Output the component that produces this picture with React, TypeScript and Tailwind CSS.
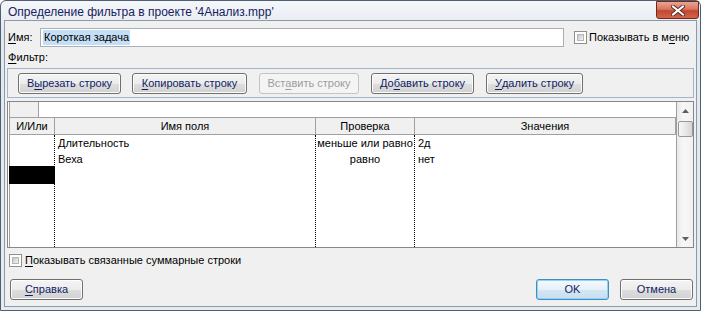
import React from "react";

const base = "font-['Liberation_Sans',Arial,sans-serif] text-[11px] leading-none";

function U({ children }: { children: React.ReactNode }) {
  return <span className="underline underline-offset-[2px]">{children}</span>;
}

function Btn({
  w,
  children,
  disabled,
  primary,
}: {
  w: string;
  children: React.ReactNode;
  disabled?: boolean;
  primary?: boolean;
}) {
  const frame = disabled
    ? "border-[#c4c4c4] text-[#9d9d9d] bg-[#f4f4f4]"
    : primary
      ? "border-[#3d8ec4] text-[#0f1d63] bg-[linear-gradient(to_bottom,#f4f9fd_0%,#e6f1fa_50%,#d3e6f4_51%,#c8dff0_100%)] shadow-[inset_0_0_0_1px_#98d1f1]"
      : "border-[#707070] text-[#0f1d63] bg-[linear-gradient(to_bottom,#f4f4f4_0%,#ececec_50%,#dedede_51%,#d1d1d1_100%)] shadow-[inset_0_0_0_1px_#fcfcfc]";
  return (
    <div
      className={`${w} h-[21px] shrink-0 rounded-[3px] border flex items-center justify-center ${frame}`}
    >
      {children}
    </div>
  );
}

function Check() {
  return (
    <div className="w-[13px] h-[13px] shrink-0 border border-[#8e8f8f] bg-white p-[2px]">
      <div className="w-full h-full bg-[linear-gradient(135deg,#c6c6c6,#f4f4f4)] border border-[#b5b5b5]" />
    </div>
  );
}

const rows = [
  { field: "Длительность", test: "меньше или равно", value: "2д" },
  { field: "Веха", test: "равно", value: "нет" },
];

export default function App() {
  return (
    <div className={`w-[703px] h-[311px] bg-white ${base}`}>
      <div className="w-[701px] h-[311px] rounded-t-[6px] border border-[#4d6073] bg-[linear-gradient(to_bottom,#f5f7fa,#e3e8ee_30px,#e6ebf0)] flex flex-col">
        {/* title bar */}
        <div className="h-[19px] flex items-start shrink-0">
          <span className="ml-[7px] mt-[5px] text-[12px] text-[#15225e]">
            Определение фильтра в проекте '4Анализ.mpp'
          </span>
          <div className="ml-auto mr-[1px] w-[43px] h-[18px] rounded-b-[3px] border border-[#6d2a20] bg-[linear-gradient(to_bottom,#eaa493_0%,#d9765f_45%,#c4472f_55%,#d0654c_100%)] flex items-center justify-center">
            <svg width="14" height="11" viewBox="0 0 14 11">
              <path d="M2 1.5 L12 9.5 M12 1.5 L2 9.5" stroke="#5a2a22" strokeWidth="4" strokeLinecap="square" />
              <path d="M2 1.5 L12 9.5 M12 1.5 L2 9.5" stroke="#ffffff" strokeWidth="2" strokeLinecap="square" />
            </svg>
          </div>
        </div>

        {/* client area */}
        <div className="mx-[3px] h-[287px] border border-[#8c99a6] bg-[#f0f0f0] flex flex-col">
          {/* name row */}
          <div className="mt-[7px] h-[19px] flex items-center">
            <span className="ml-[3px] w-[32px]">
              <U>И</U>мя:
            </span>
            <div className="w-[524px] h-[19px] border border-[#a7afb9] bg-white flex items-center pl-[2px]">
              <span className="bg-[#c3def5] h-[15px] px-[1px] flex items-center">Короткая задача</span>
            </div>
            <div className="ml-[10px]">
              <Check />
            </div>
            <span className="ml-[2px]">
              Показывать в м<U>е</U>ню
            </span>
          </div>

          <div className="mt-[4px] ml-[3px] h-[13px] flex items-center">
            <U>Ф</U>ильтр:
          </div>

          {/* toolbar group */}
          <div className="mt-[4px] ml-[2px] w-[687px] h-[30px] border border-[#a2b5cc] pt-[4px] pl-[10px] flex">
            <Btn w="w-[103px]">
              В<U>ы</U>резать строку
            </Btn>
            <div className="ml-[11px]">
              <Btn w="w-[115px]">
                <U>К</U>опировать строку
              </Btn>
            </div>
            <div className="ml-[12px]">
              <Btn w="w-[100px]" disabled>
                Вст<U>а</U>вить строку
              </Btn>
            </div>
            <div className="ml-[12px]">
              <Btn w="w-[103px]">
                До<U>б</U>авить строку
              </Btn>
            </div>
            <div className="ml-[12px]">
              <Btn w="w-[97px]">
                <U>У</U>далить строку
              </Btn>
            </div>
          </div>

          {/* grid */}
          <div className="mt-[3px] ml-[2px] w-[687px] h-[147px] border border-[#828790] bg-white flex">
            <div className="w-[668px] pl-[1px] flex flex-col">
              <div className="h-[16px] flex border-b border-[#a0a0a0] shrink-0">
                <div className="w-[30px] bg-[#f0f0f0] border-l border-r border-[#a0a0a0]" />
                <div className="flex-1 bg-white" />
              </div>
              <div className="h-[17px] flex border-b border-[#a0a0a0] bg-[#f0f0f0] shrink-0 text-black">
                <div className="w-[45px] border-l border-[#a0a0a0] flex items-center justify-center">И/Или</div>
                <div className="w-[261px] border-l border-[#a0a0a0] flex items-center justify-center">Имя поля</div>
                <div className="w-[99px] border-l border-[#a0a0a0] flex items-center justify-center">Проверка</div>
                <div className="w-[262px] border-l border-r border-[#a0a0a0] flex items-center justify-center">Значения</div>
              </div>
              <div className="flex-1 flex text-black">
                <div className="w-[45px] border-l border-[#a0a0a0] flex flex-col">
                  <div className="h-[16px]" />
                  <div className="h-[15px]" />
                  <div className="-ml-[1px] w-[46px] h-[18px] bg-black" />
                </div>
                <div className="w-[261px] border-l border-dotted border-black flex flex-col">
                  {rows.map((r) => (
                    <div key={r.field} className="h-[16px] pl-[3px] flex items-center">
                      {r.field}
                    </div>
                  ))}
                </div>
                <div className="w-[99px] border-l border-dotted border-black flex flex-col">
                  {rows.map((r) => (
                    <div key={r.field} className="h-[16px] flex items-center justify-center whitespace-nowrap">
                      {r.test}
                    </div>
                  ))}
                </div>
                <div className="w-[262px] border-l border-dotted border-black flex flex-col">
                  {rows.map((r) => (
                    <div key={r.field} className="h-[16px] pl-[3px] flex items-center">
                      {r.value}
                    </div>
                  ))}
                </div>
              </div>
            </div>
            {/* scrollbar */}
            <div className="w-[17px] border-l border-[#a0a0a0] bg-[linear-gradient(to_right,#e9e9e9,#f7f7f7_40%,#f1f1f1)] flex flex-col">
              <div className="h-[17px] flex items-center justify-center">
                <svg width="7" height="4" viewBox="0 0 7 4">
                  <path d="M3.5 0 L7 4 L0 4 Z" fill="#5f5f5f" />
                </svg>
              </div>
              <div className="mt-[2px] mx-auto w-[15px] h-[16px] rounded-[2px] border border-[#979797] bg-[linear-gradient(to_right,#f6f6f6,#e8e8e8_50%,#d6d6d6)]" />
              <div className="flex-1" />
              <div className="h-[17px] flex items-center justify-center">
                <svg width="7" height="4" viewBox="0 0 7 4">
                  <path d="M0 0 L7 0 L3.5 4 Z" fill="#5f5f5f" />
                </svg>
              </div>
            </div>
          </div>

          {/* summary checkbox */}
          <div className="mt-[6px] ml-[4px] h-[13px] flex items-center">
            <Check />
            <span className="ml-[3px]">
              <U>П</U>оказывать связанные суммарные строки
            </span>
          </div>

          {/* bottom buttons */}
          <div className="mt-[12px] flex">
            <div className="ml-[5px]">
              <Btn w="w-[73px]">
                <U>С</U>правка
              </Btn>
            </div>
            <div className="ml-auto">
              <Btn w="w-[73px]" primary>
                OK
              </Btn>
            </div>
            <div className="ml-[11px] mr-[3px]">
              <Btn w="w-[73px]">Отмена</Btn>
            </div>
          </div>
        </div>
      </div>
    </div>
  );
}
